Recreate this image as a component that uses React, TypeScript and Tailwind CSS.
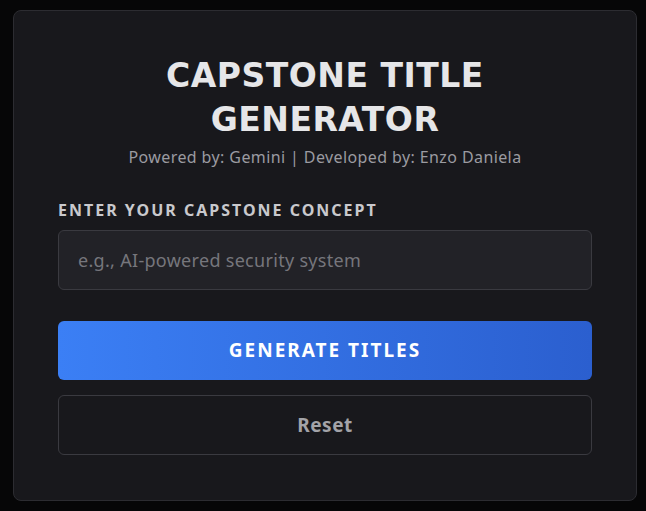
export default function App() {
  return (
    <div className="min-h-[511px] bg-[#060607] pl-[13px] pt-[10px] font-['Noto_Sans',sans-serif]">
      <div className="flex flex-col w-[624px] h-[491px] rounded-lg border border-[#2c2c31] bg-[#18181c] px-[44px] pt-[43px]">
        <h1 className="text-center text-[33px] leading-[44px] font-bold tracking-[0.5px] text-[#e6e6e8] font-['DejaVu_Sans',sans-serif]">
          CAPSTONE TITLE
          <br />
          GENERATOR
        </h1>
        <p className="mt-[3px] text-center text-[16px] text-[#9b9ba1] tracking-[0.4px]">
          Powered by: Gemini | Developed by: Enzo Daniela
        </p>

        <label className="mt-[29px] text-[16px] font-bold tracking-[2px] text-[#c9c9cd]">
          ENTER YOUR CAPSTONE CONCEPT
        </label>
        <input
          placeholder="e.g., AI-powered security system"
          className="mt-[8px] w-full h-[60px] rounded-md border border-[#3a3a40] bg-[#222227] px-[19px] text-[18px] tracking-[0.3px] text-[#e6e6e8] placeholder:text-[#76767c] outline-none"
        />

        <button className="mt-[31px] w-full h-[59px] rounded-md bg-gradient-to-r from-[#3b7ff5] to-[#2b5fcf] text-white text-[19px] font-bold tracking-[2px]">
          GENERATE TITLES
        </button>
        <button className="mt-[15px] w-full h-[60px] rounded-md border border-[#3a3a40] bg-transparent text-[#a3a3a8] text-[19px] font-bold tracking-[0.5px]">
          Reset
        </button>
      </div>
    </div>
  );
}
